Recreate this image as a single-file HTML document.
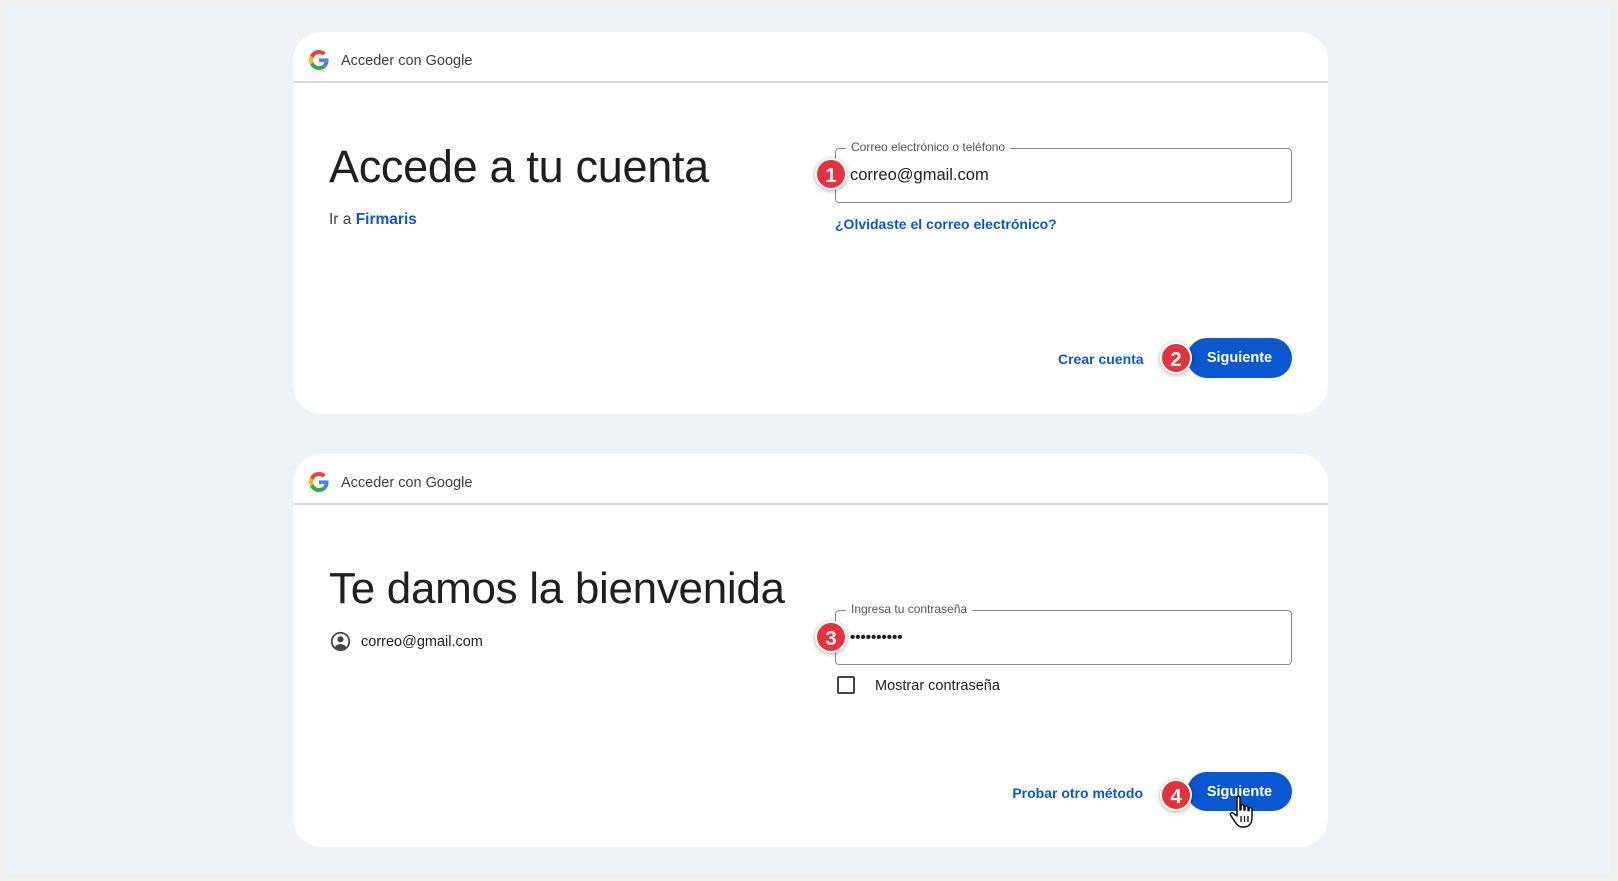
<!DOCTYPE html>
<html><head><meta charset="utf-8"><style>
*{box-sizing:border-box;margin:0;padding:0}
body{width:1618px;height:881px;background:#f0f0f0;position:relative;overflow:hidden;font-family:"Liberation Sans",Arial,sans-serif;color:#1f1f1f}
.inner{position:absolute;left:8px;top:8px;width:1602px;height:865px;background:#eff2f7}
.card{position:absolute;left:293px;width:1035px;background:#fff;border-radius:29px;overflow:hidden}
.hdr{position:absolute;left:0;top:0;width:100%;height:51px;border-bottom:2px solid #dcdcdc}
.hdr svg{position:absolute;left:16px;top:18px}
.hdr span{position:absolute;left:48px;top:21px;font-size:14.5px;color:#3c4043}
.abs{position:absolute;white-space:nowrap}
.h1{font-size:45px;color:#1f1f1f;letter-spacing:-0.3px}
.input{position:absolute;border:1.5px solid #8a8a8a;border-radius:4px}
.lbl{position:absolute;top:-9px;left:10px;background:#fff;padding:0 5px;font-size:12px;color:#555}
.badge{position:absolute;width:32px;height:32px;border-radius:50%;background:#e5323b;color:#fff;font-weight:bold;font-size:20px;text-align:center;line-height:32px;border:2px solid #fff;box-shadow:0 1px 5px rgba(0,0,0,.35)}
.btn{position:absolute;background:#0b57d0;color:#fff;font-weight:bold;font-size:14.5px;border-radius:20px;text-align:center}
.link{color:#0b57d0;font-weight:bold;font-size:14px}
</style></head><body>
<div class="inner"></div>

<div class="card" style="top:32px;height:382px">
 <div class="hdr">
  <svg width="20" height="20" viewBox="0 0 48 48"><path fill="#EA4335" d="M24 9.5c3.5 0 6.7 1.2 9.2 3.6l6.9-6.9C35.9 2.4 30.5 0 24 0 14.6 0 6.6 5.4 2.7 13.3l8 6.2C12.6 13.6 17.8 9.5 24 9.5z"/><path fill="#4285F4" d="M46.9 24.5c0-1.6-.1-3.1-.4-4.5H24v9h12.9c-.6 3-2.3 5.5-4.8 7.2l7.7 6c4.5-4.2 7.1-10.3 7.1-17.7z"/><path fill="#FBBC05" d="M10.7 28.5c-.5-1.4-.8-2.9-.8-4.5s.3-3.1.8-4.5l-8-6.2C1 16.6 0 20.2 0 24s.9 7.4 2.7 10.7l8-6.2z"/><path fill="#34A853" d="M24 48c6.5 0 11.9-2.1 15.9-5.8l-7.7-6c-2.2 1.5-5 2.3-8.2 2.3-6.2 0-11.4-4.1-13.3-9.7l-8 6.2C6.6 42.6 14.6 48 24 48z"/></svg>
  <span>Acceder con Google</span>
 </div>
 <div class="abs h1" style="left:36px;top:109px">Accede a tu cuenta</div>
 <div class="abs" style="left:36px;top:179px;font-size:15.5px;color:#3c4043">Ir a <span class="link" style="font-size:15.5px">Firmaris</span></div>
 <div class="input" style="left:542px;top:116px;width:457px;height:55px"><div class="lbl">Correo electrónico o teléfono</div>
  <div class="abs" style="left:14px;top:17px;font-size:16.5px;color:#1f1f1f">correo@gmail.com</div></div>
 <div class="badge" style="left:522px;top:126px">1</div>
 <div class="abs link" style="left:542px;top:184px">¿Olvidaste el correo electrónico?</div>
 <div class="abs link" style="left:765px;top:319px;width:85px;text-align:right">Crear cuenta</div>
 <div class="btn" style="left:894px;top:306px;width:105px;height:40px;line-height:41px">Siguiente</div>
 <div class="badge" style="left:867px;top:310px">2</div>
</div>

<div class="card" style="top:454px;height:393px">
 <div class="hdr">
  <svg width="20" height="20" viewBox="0 0 48 48"><path fill="#EA4335" d="M24 9.5c3.5 0 6.7 1.2 9.2 3.6l6.9-6.9C35.9 2.4 30.5 0 24 0 14.6 0 6.6 5.4 2.7 13.3l8 6.2C12.6 13.6 17.8 9.5 24 9.5z"/><path fill="#4285F4" d="M46.9 24.5c0-1.6-.1-3.1-.4-4.5H24v9h12.9c-.6 3-2.3 5.5-4.8 7.2l7.7 6c4.5-4.2 7.1-10.3 7.1-17.7z"/><path fill="#FBBC05" d="M10.7 28.5c-.5-1.4-.8-2.9-.8-4.5s.3-3.1.8-4.5l-8-6.2C1 16.6 0 20.2 0 24s.9 7.4 2.7 10.7l8-6.2z"/><path fill="#34A853" d="M24 48c6.5 0 11.9-2.1 15.9-5.8l-7.7-6c-2.2 1.5-5 2.3-8.2 2.3-6.2 0-11.4-4.1-13.3-9.7l-8 6.2C6.6 42.6 14.6 48 24 48z"/></svg>
  <span>Acceder con Google</span>
 </div>
 <div class="abs h1" style="left:36px;top:110px;font-size:44px">Te damos la bienvenida</div>
 <svg class="abs" style="left:37px;top:177px" width="21" height="21" viewBox="0 0 24 24"><circle cx="12" cy="12" r="10" fill="none" stroke="#444" stroke-width="2"/><circle cx="12" cy="9.5" r="3.5" fill="#444"/><path d="M5.5 18.5c1.5-2.5 4-3.5 6.5-3.5s5 1 6.5 3.5A9 9 0 0 1 5.5 18.5z" fill="#444"/></svg>
 <div class="abs" style="left:68px;top:180px;font-size:14.5px;color:#1f1f1f">correo@gmail.com</div>
 <div class="input" style="left:542px;top:156px;width:457px;height:55px"><div class="lbl">Ingresa tu contraseña</div>
  <div class="abs" style="left:14px;top:18px;font-size:15px;font-weight:bold;letter-spacing:0px">••••••••••</div></div>
 <div class="badge" style="left:522px;top:167px">3</div>
 <div class="abs" style="left:544px;top:222px;width:18px;height:18px;border:2px solid #444;border-radius:2px"></div>
 <div class="abs" style="left:582px;top:224px;font-size:14.5px;color:#1f1f1f">Mostrar contraseña</div>
 <div class="abs link" style="left:680px;top:331px;width:170px;text-align:right">Probar otro método</div>
 <div class="btn" style="left:894px;top:318px;width:105px;height:39px;line-height:40px">Siguiente</div>
 <div class="badge" style="left:867px;top:325px">4</div>
 <svg class="abs" style="left:935px;top:340px" width="32" height="36" viewBox="0 0 32 36"><path d="M9 3.5c0-1.6 3-1.6 3 0V16l1-.2V12c0-1.6 3-1.6 3 0v4l1 .1v-2.6c0-1.6 3-1.6 3 0v3l1 .2v-1.8c0-1.6 3-1.6 3 0V24c0 5-3 9-8 9h-2c-3 0-5-2-7-5l-4.5-7c-1-1.6 1.5-3.2 2.8-1.8L9 22z" fill="#fff" stroke="#111" stroke-width="1.5" stroke-linejoin="round"/><path d="M13 22v6M16.5 22v6M20 22v6" stroke="#111" stroke-width="1.3"/></svg>
</div>
</body></html>
